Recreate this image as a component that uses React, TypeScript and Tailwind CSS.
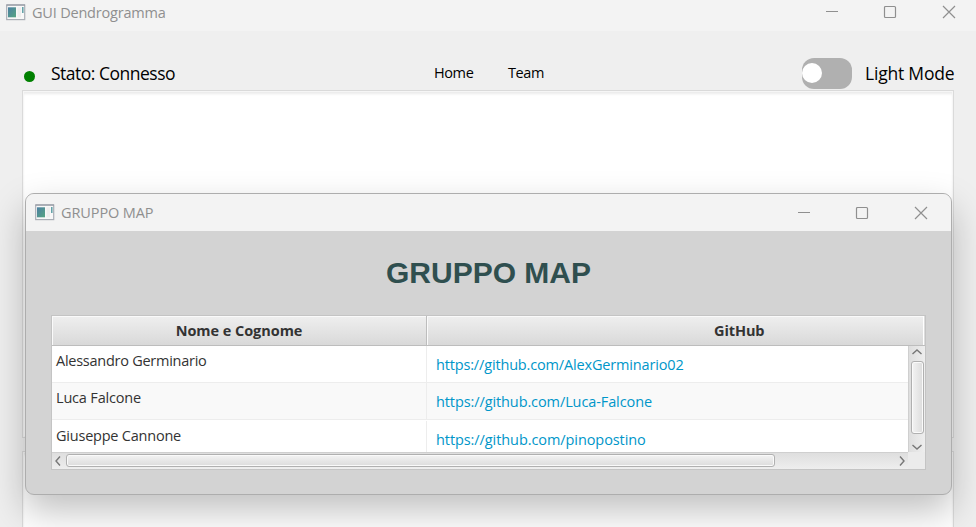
import type { ReactNode } from "react";

function AppIcon() {
  return (
    <svg width="20" height="17" viewBox="0 0 20 17" className="block shrink-0">
      <defs>
        <linearGradient id="pane" x1="0" y1="0" x2="1" y2="1">
          <stop offset="0" stopColor="#4c7fa3" />
          <stop offset="1" stopColor="#56a582" />
        </linearGradient>
      </defs>
      <rect x="0.7" y="1" width="18" height="14.6" fill="#f8f8f8" stroke="#a9adb5" strokeWidth="1.2" />
      <path d="M0.5 1H19" stroke="#8e939d" strokeWidth="1" />
      <rect x="2" y="3.3" width="8" height="10" fill="url(#pane)" />
      <rect x="11.5" y="3.3" width="3.5" height="10" fill="#eeeeee" />
      <path d="M16.8 3V9" stroke="#5f9fa5" strokeWidth="1.5" />
    </svg>
  );
}

function WindowControls() {
  return (
    <div className="ml-auto flex items-center gap-[45px] text-[#8f8f8f]">
      <svg width="14" height="14" viewBox="0 0 14 14" fill="none" stroke="currentColor" className="-mr-px">
        <path d="M1 6.5H13" />
      </svg>
      <svg width="14" height="14" viewBox="0 0 14 14" fill="none" stroke="currentColor" strokeWidth="1.2">
        <rect x="1.5" y="1.5" width="11" height="11" rx="1" />
      </svg>
      <svg width="14" height="14" viewBox="0 0 14 14" fill="none" stroke="currentColor" strokeWidth="1.2">
        <path d="M1 1L13 13M13 1L1 13" />
      </svg>
    </div>
  );
}

function Chevron({ d }: { d: string }) {
  return (
    <svg width="12" height="12" viewBox="0 0 12 12" fill="none" stroke="#777777" strokeWidth="1.4" className="block shrink-0">
      <path d={d} />
    </svg>
  );
}

function Panel({ className, children }: { className: string; children?: ReactNode }) {
  return (
    <div className={`mx-[22px] border border-[#dadada] bg-white shadow-[inset_0_0_0_1px_#f6f6f6,inset_0_3px_3px_#ebebeb] ${className}`}>
      {children}
    </div>
  );
}

const members = [
  { name: "Alessandro Germinario", url: "https://github.com/AlexGerminario02", row: "h-[37px] bg-white border-b", nameSpace: "tracking-[-0.26px]", urlSpace: "tracking-[-0.16px]" },
  { name: "Luca Falcone", url: "https://github.com/Luca-Falcone", row: "h-[37px] bg-[#f9f9f9] border-b", nameSpace: "tracking-[-0.18px]", urlSpace: "tracking-[-0.1px]" },
  { name: "Giuseppe Cannone", url: "https://github.com/pinopostino", row: "h-[32px] bg-white pt-px", nameSpace: "tracking-[-0.22px]", urlSpace: "tracking-[-0.08px]" },
];

function MemberTable() {
  return (
    <div className="ml-[25px] flex h-[155px] w-[875px] flex-col border border-[#c4c4c4] bg-[#ececec]">
      <div className="flex h-[30px] shrink-0 border-b border-[#bdbdbd] text-[14.5px] leading-[29px] font-bold text-[#333333]">
        <div className="w-[375px] border-r border-[#bdbdbd] bg-linear-to-b from-[#efefef] to-[#d9d9d9] text-center shadow-[inset_1px_1px_0_#fafafa]">
          <span className="tracking-[-0.05px]">Nome e Cognome</span>
        </div>
        <div className="w-[496px] bg-linear-to-b from-[#efefef] to-[#d9d9d9] pl-[287px] shadow-[inset_1px_1px_0_#fafafa]">
          <span className="tracking-[-0.1px]">GitHub</span>
        </div>
        <div className="flex-1 border-r border-[#dcdcdc] bg-white" />
      </div>
      <div className="flex h-[106px] shrink-0">
        <div className="w-[856px] overflow-hidden">
          {members.map((m) => (
            <div key={m.name} className={`flex border-[#ededed] text-[14.5px] leading-5 ${m.row}`}>
              <div className="w-[375px] border-r border-[#ededed] pt-[5px] pl-1 text-[#333333]">
                <span className={m.nameSpace}>{m.name}</span>
              </div>
              <div className="pt-[9px] pl-[9px] text-[#0096c9]">
                <span className={m.urlSpace}>{m.url}</span>
              </div>
            </div>
          ))}
        </div>
        <div className="flex w-[17px] flex-col items-center border-l border-[#cfcfcf] bg-linear-to-r from-[#dedede] to-[#eeeeee]">
          <Chevron d="M1.5 8L6 4L10.5 8" />
          <div className="mt-[3px] h-[73px] w-[13px] shrink-0 rounded-[3px] border border-[#b0b0b0] bg-linear-to-r from-[#f3f3f3] to-[#dcdcdc] shadow-[inset_0_0_0_1px_#fafafa]" />
          <div className="mt-[8px]"><Chevron d="M1.5 3L6 7L10.5 3" /></div>
        </div>
      </div>
      <div className="flex h-[17px] shrink-0 items-start border-t border-[#cfcfcf] bg-linear-to-b from-[#dedede] to-[#eeeeee] pt-px">
        <div className="pt-px"><Chevron d="M8 1.5L4 6L8 10.5" /></div>
        <div className="ml-[2px] h-[13px] w-[709px] rounded-[3px] border border-[#b0b0b0] bg-linear-to-b from-[#f3f3f3] to-[#dcdcdc] shadow-[inset_0_0_0_1px_#fafafa]" />
        <div className="ml-[121px] pt-px"><Chevron d="M4 1.5L8 6L4 10.5" /></div>
        <div className="-mt-[2px] ml-auto h-[17px] w-[17px] bg-[#ebebeb]" />
      </div>
    </div>
  );
}

function TeamDialog() {
  return (
    <div className="absolute top-[193px] left-[25px] h-[302px] w-[927px] overflow-hidden rounded-[9px] border border-[#adadad] bg-[#d3d3d3] shadow-[0_16px_36px_0_rgba(0,0,0,0.25)]">
      <div className="flex h-[37px] items-center bg-[#f3f3f3] pr-[23px] pl-[9px]">
        <AppIcon />
        <span className="ml-[6px] text-[14.5px] tracking-[-0.1px] text-[#8f8f8f]">GRUPPO MAP</span>
        <WindowControls />
      </div>
      <h1 className="mt-[24px] mb-[24px] h-9 text-center font-['Liberation_Sans',Arial,sans-serif] text-[30px] leading-9 font-bold text-[#2f4f4f]">GRUPPO MAP</h1>
      <MemberTable />
    </div>
  );
}

export default function App() {
  return (
    <div className="relative h-[527px] w-[976px] overflow-hidden bg-[#efefef] font-['Open_Sans','Noto_Sans',sans-serif]">
      <header className="flex h-[31px] items-start bg-[#f3f3f3] pt-[4px] pr-[20px] pl-[6px]">
        <AppIcon />
        <span className="ml-[6px] text-[14.5px] leading-[18px] tracking-[-0.2px] text-[#8f8f8f]">GUI Dendrogramma</span>
        <div className="ml-auto pt-px"><WindowControls /></div>
      </header>
      <div className="flex h-[59px] items-start pr-[22px] pl-6 text-black">
        <span className="mt-[40px] size-[11px] rounded-full bg-[#008000]" />
        <span className="mt-[30px] ml-4 w-[383px] text-[17.5px] leading-6 tracking-[-0.5px]">Stato: Connesso</span>
        <span className="mt-[32px] w-[74px] text-[14.5px] leading-5 tracking-[-0.4px]">Home</span>
        <span className="mt-[32px] text-[14.5px] leading-5 tracking-[-0.4px]">Team</span>
        <span className="mt-[27px] ml-auto h-[31px] w-[50px] rounded-[12px] bg-[#b0b0b0] pt-[5px]">
          <span className="block size-5 rounded-full bg-white" />
        </span>
        <span className="mt-[30px] ml-[13px] w-[89px] text-[17.5px] leading-6 tracking-[-0.2px] whitespace-nowrap">Light Mode</span>
      </div>
      <Panel className="h-[348px]" />
      <Panel className="mt-[13px] h-[100px]" />
      <TeamDialog />
    </div>
  );
}
